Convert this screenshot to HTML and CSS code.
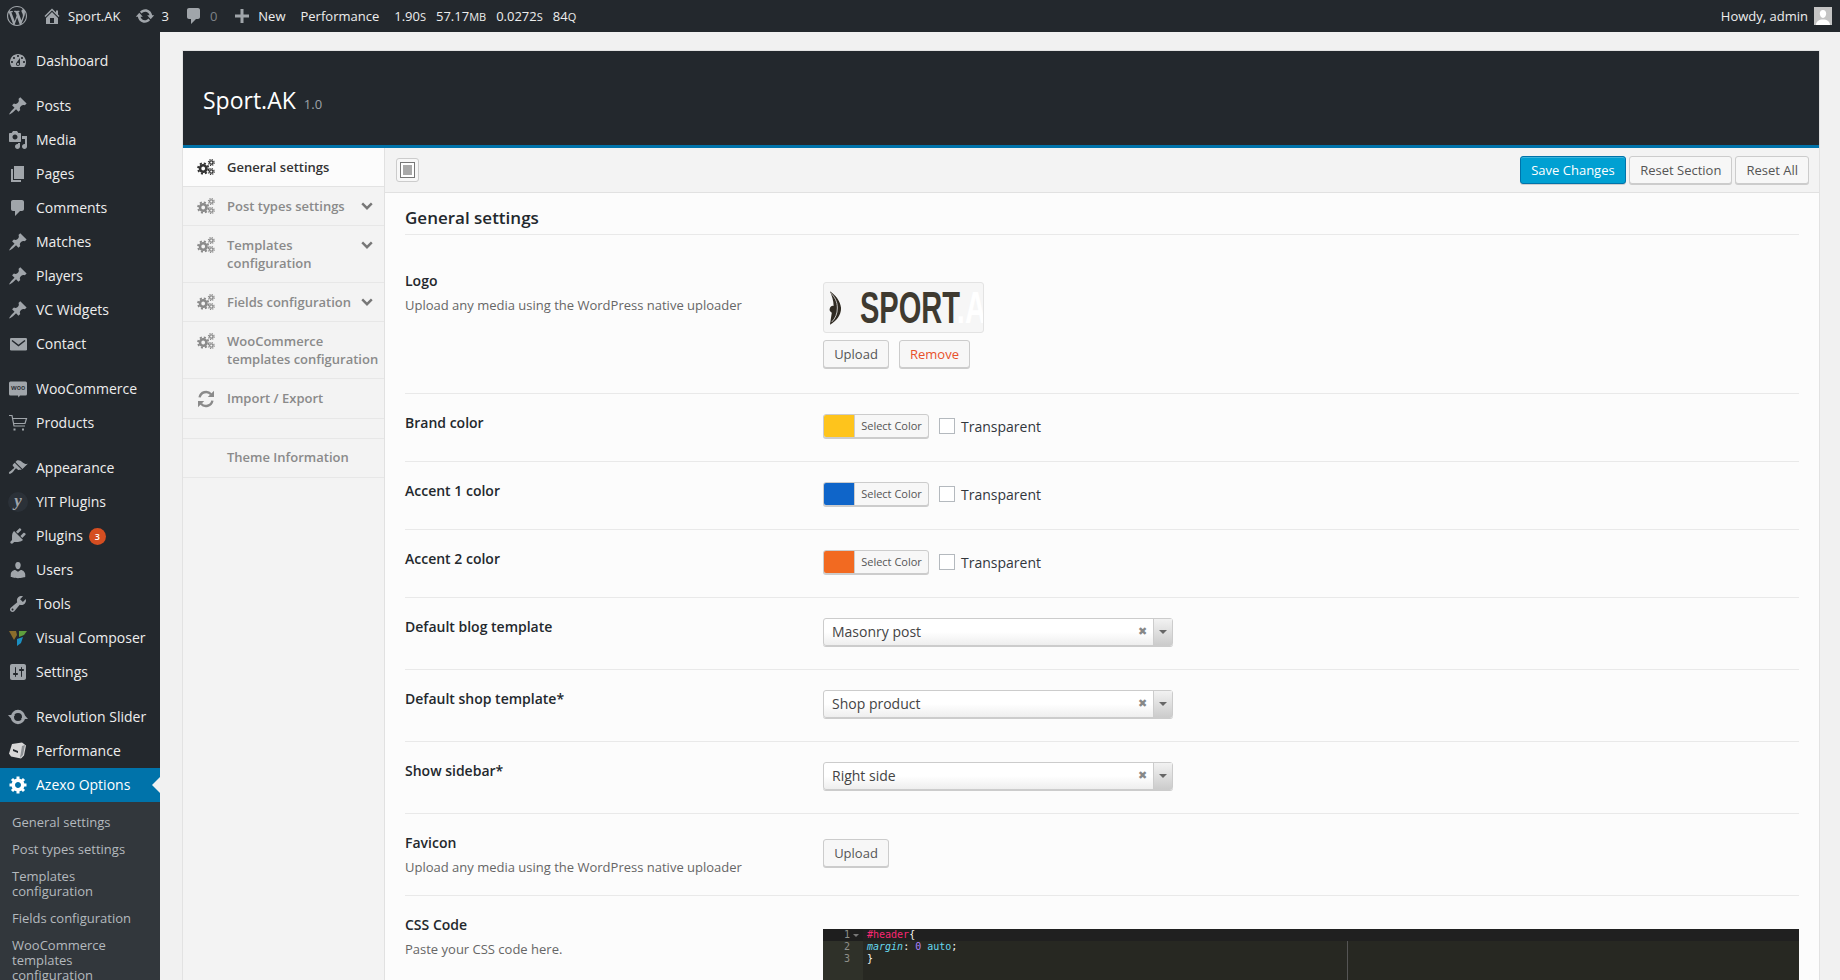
FILE: index.html
```html
<!doctype html>
<html lang="en-us">
  <head>
    <meta charset="utf-8">
    <title>Sport.AK Options</title>
    <link rel="stylesheet" href="styles.css">
  </head>
  <body>
    <svg class="sprite" xmlns="http://www.w3.org/2000/svg">
      <symbol id="i-wp" viewBox="0 0 20 20"><path d="M20 10c0-5.51-4.49-10-10-10C4.48 0 0 4.49 0 10c0 5.52 4.48 10 10 10 5.51 0 10-4.48 10-10zM7.78 15.37L4.37 6.22c.55-.02 1.17-.08 1.17-.08.5-.06.44-1.13-.06-1.11 0 0-1.45.11-2.37.11-.18 0-.37 0-.58-.01C4.12 2.69 6.87 1.11 10 1.11c2.33 0 4.45.87 6.05 2.34-.68-.11-1.65.39-1.65 1.58 0 .74.45 1.36.9 2.1.35.61.55 1.36.55 2.46 0 1.49-1.4 5-1.4 5l-3.03-8.37c.54-.02.82-.17.82-.17.5-.05.44-1.25-.06-1.22 0 0-1.44.12-2.38.12-.87 0-2.33-.12-2.33-.12-.5-.03-.56 1.2-.06 1.22l.92.08 1.26 3.41zM17.41 10c.24-.64.74-1.87.43-4.25.7 1.29 1.05 2.71 1.05 4.25 0 3.29-1.73 6.24-4.4 7.78.97-2.59 1.94-5.2 2.92-7.78zM6.1 18.09C3.12 16.65 1.11 13.53 1.11 10c0-1.3.23-2.48.72-3.59C3.25 10.3 4.67 14.2 6.1 18.09zm4.03-6.63l2.58 6.98c-.86.29-1.76.45-2.71.45-.79 0-1.57-.11-2.29-.33.81-2.38 1.62-4.74 2.42-7.1z"/></symbol>
      <symbol id="i-home" viewBox="0 0 20 20"><path d="M16 8.5l1.53 1.53-1.06 1.06L10 4.62l-6.47 6.47-1.06-1.06L10 2.5l4 4v-2h2v4zm-6-2.46l6 5.99V18H4v-5.97zM12 17v-5H8v5h4z"/></symbol>
      <symbol id="i-update" viewBox="0 0 20 20"><path d="M10.2 3.28c3.53 0 6.43 2.61 6.92 6h2.08l-3.5 4-3.5-4h2.32c-.45-1.97-2.21-3.45-4.32-3.45-1.45 0-2.73.71-3.54 1.78L4.95 5.66C6.23 4.2 8.11 3.28 10.2 3.28zm-.4 13.44c-3.52 0-6.43-2.61-6.92-6H.8l3.5-4c1.17 1.33 2.33 2.67 3.5 4H5.48c.45 1.97 2.21 3.45 4.32 3.45 1.45 0 2.73-.71 3.54-1.78l1.71 1.95c-1.28 1.46-3.15 2.38-5.25 2.38z"/></symbol>
      <symbol id="i-comment" viewBox="0 0 20 20"><path d="M5 2h9c1.1 0 2 .9 2 2v7c0 1.1-.9 2-2 2h-2l-5 5v-5H5c-1.1 0-2-.9-2-2V4c0-1.1.9-2 2-2z"/></symbol>
      <symbol id="i-plus" viewBox="0 0 20 20"><path d="M17 8.500v3h-5.500V17h-3v-5.500H3v-3h5.500V3h3v5.500z"/></symbol>
      <symbol id="i-dash" viewBox="0 0 20 20"><path d="M3.76 16h12.48c1.1-1.37 1.76-3.11 1.76-5 0-4.42-3.58-8-8-8s-8 3.58-8 8c0 1.89.66 3.63 1.76 5zM10 4c.55 0 1 .45 1 1s-.45 1-1 1-1-.45-1-1 .45-1 1-1zM6 6c.55 0 1 .45 1 1s-.45 1-1 1-1-.45-1-1 .45-1 1-1zm8 0c.55 0 1 .45 1 1s-.45 1-1 1-1-.45-1-1 .45-1 1-1zm-5.37 5.55L12 7v6c0 1.1-.9 2-2 2s-2-.9-2-2c0-.57.24-1.08.63-1.45zM4 10c.55 0 1 .45 1 1s-.45 1-1 1-1-.45-1-1 .45-1 1-1zm12 0c.55 0 1 .45 1 1s-.45 1-1 1-1-.45-1-1 .45-1 1-1zm-5 3c0-.55-.45-1-1-1s-1 .45-1 1 .45 1 1 1 1-.45 1-1z" fill-rule="evenodd"/></symbol>
      <symbol id="i-pin" viewBox="0 0 20 20"><path d="M10.44 3.02l1.82-1.82 6.36 6.35-1.83 1.82c-1.05-.68-2.48-.57-3.41.36l-.75.75c-.92.93-1.04 2.35-.35 3.41l-1.83 1.82-2.41-2.41-2.8 2.79c-.42.42-3.38 2.71-3.8 2.29s1.86-3.39 2.28-3.81l2.79-2.79L4.1 9.36l1.83-1.82c1.05.69 2.48.57 3.4-.36l.75-.75c.93-.92 1.05-2.35.36-3.41z"/></symbol>
      <symbol id="i-media" viewBox="0 0 20 20"><path d="M13 11V4c0-.55-.45-1-1-1h-1.67L9 1H5L3.67 3H2c-.55 0-1 .45-1 1v7c0 .55.45 1 1 1h10c.55 0 1-.45 1-1zM7 4.5c1.38 0 2.5 1.12 2.5 2.5S8.38 9.5 7 9.5 4.5 8.38 4.5 7 5.62 4.5 7 4.5zM14 6h5v10.5c0 1.38-1.12 2.5-2.5 2.5S14 17.88 14 16.5s1.12-2.5 2.5-2.5c.17 0 .34.02.5.05V9h-3V6zm-4 8.05V13h2v3.5c0 1.38-1.12 2.5-2.5 2.5S7 17.88 7 16.5 8.12 14 9.5 14c.17 0 .34.02.5.05z" fill-rule="evenodd"/></symbol>
      <symbol id="i-pages" viewBox="0 0 20 20"><path d="M6 15V2h10v13H6zm-1 1h8v2H3V5h2v11z"/></symbol>
      <symbol id="i-mail" viewBox="0 0 20 20"><rect x="2" y="4" width="17" height="12.500" rx="1.300"/><path d="M4 6.500l6.500 5 6.500-5" fill="none" stroke="#23282d" stroke-width="1.500"/></symbol>
      <symbol id="i-brush" viewBox="0 0 20 20"><path d="M14.48 11.06L7.41 3.99l1.5-1.5c.5-.56 2.3-.47 3.51.32 1.21.8 1.43 1.28 2.91 2.1 1.18.64 2.45 1.26 4.45.85zm-.71.71L6.7 4.7 4.93 6.47c-.39.39-.39 1.02 0 1.41l1.06 1.06c.39.39.39 1.03 0 1.42-.6.6-1.43 1.11-2.21 1.69-.35.26-.7.53-1.01.84C1.43 13.23.4 14.93 1.1 15.63c.71.7 2.4-.33 3.75-1.68.31-.31.58-.66.85-1.01.58-.78 1.09-1.61 1.69-2.21.39-.39 1.02-.39 1.41 0l1.06 1.06c.39.39 1.02.39 1.41 0z"/></symbol>
      <symbol id="i-plug" viewBox="0 0 20 20"><path d="M13.11 4.36L9.87 7.6 8 5.73l3.24-3.24c.35-.34 1.05-.2 1.56.32.52.51.66 1.21.31 1.55zm-8 1.77l.91-1.12 9.01 9.01-1.19.84c-.71.71-2.63 1.16-3.82 1.16H6.14L4.9 17.26c-.59.59-1.54.59-2.12 0-.59-.58-.59-1.53 0-2.12l1.24-1.24v-3.88c0-1.13.4-3.19 1.09-3.89zm7.26 3.97l3.24-3.24c.34-.35 1.04-.21 1.55.31.52.51.66 1.21.31 1.55l-3.24 3.25z"/></symbol>
      <symbol id="i-user" viewBox="0 0 20 20"><path d="M10 9.25c-2.27 0-2.73-3.44-2.73-3.44C7 4.02 7.82 2 9.97 2c2.16 0 2.98 2.02 2.71 3.81 0 0-.41 3.44-2.68 3.44zm0 2.57L12.72 10c2.39 0 4.52 2.33 4.52 4.53v2.49s-3.65 1.13-7.24 1.13c-3.65 0-7.24-1.13-7.24-1.13v-2.49c0-2.25 1.94-4.48 4.47-4.48z"/></symbol>
      <symbol id="i-tool" viewBox="0 0 20 20"><path fill-rule="evenodd" d="M16.68 9.77c-1.34 1.34-3.3 1.67-4.95.99l-5.41 6.52c-.99.99-2.59.99-3.58 0s-.99-2.59 0-3.57l6.52-5.42c-.68-1.65-.35-3.61.99-4.95 1.28-1.28 3.12-1.62 4.72-1.06l-2.89 2.89 2.82 2.82 2.86-2.87c.53 1.58.18 3.39-1.08 4.65zM3.81 16.21c.4.39 1.04.39 1.43 0 .4-.4.4-1.04 0-1.43-.39-.4-1.03-.4-1.43 0-.39.39-.39 1.03 0 1.43z"/></symbol>
      <symbol id="i-set" viewBox="0 0 20 20"><path fill-rule="evenodd" d="M18 16V4c0-1.1-.9-2-2-2H4c-1.1 0-2 .9-2 2v12c0 1.1.9 2 2 2h12c1.1 0 2-.9 2-2zM8 11h1c.55 0 1 .45 1 1s-.45 1-1 1H8v1.5c0 .28-.22.5-.5.5s-.5-.22-.5-.5V13H6c-.55 0-1-.45-1-1s.45-1 1-1h1V5.5c0-.28.22-.5.5-.5s.5.22.5.5V11zm5-2h-1c-.55 0-1-.45-1-1s.45-1 1-1h1V5.5c0-.28.22-.5.5-.5s.5.22.5.5V7h1c.55 0 1 .45 1 1s-.45 1-1 1h-1v5.5c0 .28-.22.5-.5.5s-.5-.22-.5-.5V9z"/></symbol>
      <symbol id="i-gear" viewBox="0 0 20 20"><path fill-rule="evenodd" d="M18.5 11.500h-2.180c-.170.700-.440 1.350-.810 1.930l1.540 1.540-2.100 2.100-1.540-1.540c-.580.360-1.230.630-1.910.790v2.180h-3v-2.180c-.680-.160-1.330-.430-1.910-.790l-1.540 1.540-2.120-2.120 1.540-1.540c-.360-.580-.630-1.230-.790-1.910H1.500V8.530h2.170c.160-.700.440-1.350.800-1.940L2.930 5.050l2.100-2.100 1.540 1.540c.580-.370 1.240-.640 1.930-.810V1.500h3v2.180c.680.160 1.330.430 1.910.790l1.540-1.540 2.120 2.120-1.540 1.540c.360.590.640 1.240.800 1.940h2.170v2.970zM10 13c1.660 0 3-1.340 3-3s-1.340-3-3-3-3 1.340-3 3 1.340 3 3 3z"/></symbol>
      <symbol id="i-cogs" viewBox="0 0 18 16" fill="none" stroke="currentColor">
        <circle cx="6.200" cy="9.500" r="3.200" stroke-width="2.600"/>
        <circle cx="6.200" cy="9.500" r="5.200" stroke-width="1.800" stroke-dasharray="2.100 1.980"/>
        <circle cx="14.300" cy="3.500" r="1.700" stroke-width="1.300"/>
        <circle cx="14.300" cy="3.500" r="2.900" stroke-width="1.200" stroke-dasharray="1.200 1.080"/>
        <circle cx="14.300" cy="12.500" r="1.700" stroke-width="1.300"/>
        <circle cx="14.300" cy="12.500" r="2.900" stroke-width="1.200" stroke-dasharray="1.200 1.080"/>
      </symbol>
      <symbol id="i-refresh" viewBox="0 0 18 18">
        <path d="M2.6 7.4A6.6 6.6 0 0 1 14 4.2M15.4 10.6A6.6 6.6 0 0 1 4 13.8" fill="none" stroke="currentColor" stroke-width="2.4"/>
        <path d="M17 .8V7h-6.2zM1 17.2V11h6.2z"/>
      </symbol>
      <symbol id="i-chev" viewBox="0 0 12 8"><path d="M1.2 1.4 6 6.2l4.8-4.8" fill="none" stroke="currentColor" stroke-width="2.4"/></symbol>
      <symbol id="i-cart" viewBox="0 0 20 20"><path d="M1 2.5h3l2 10.5h11M4.6 5.5h13.9l-1.5 5H5.6" fill="none" stroke="currentColor" stroke-width="1.2"/><path d="M5.5 15.5h2v2h-2zM14 15.5h2v2h-2z"/></symbol>
      <symbol id="i-woo" viewBox="0 0 20 20"><path d="M2.5 2.5h15a1.5 1.5 0 0 1 1.5 1.5v11a1.5 1.5 0 0 1-1.5 1.5H12l-1.5 2-.5-2H2.5A1.5 1.5 0 0 1 1 15V4a1.5 1.5 0 0 1 1.5-1.5z"/></symbol>
      <symbol id="i-vc" viewBox="0 0 20 20">
        <path d="M1 3h7l1 4-3 5z" fill="#8a6d2b"/>
        <path d="M11 3h8l-3 4-5 2z" fill="#5f9e3c"/>
        <path d="M9 11l6-2-2 6-4 3z" fill="#1b8fc1"/>
      </symbol>
      <symbol id="i-slider" viewBox="0 0 20 20"><circle cx="10" cy="10" r="5.6" fill="none" stroke="currentColor" stroke-width="3.2"/><path d="M0 8h7l-3.5 4zM13 12h7l-3.5-4z"/></symbol>
      <symbol id="i-cube" viewBox="0 0 20 20"><path d="M4 3l10-1.5 4 3-2 10-3 3-10-2-2-3z" fill="#d8d8d8"/><path d="M14 5l3-1-2 10-3 3z" fill="#8b8f93"/><path d="M5 8l5 2v2L5 10z" fill="#23282d"/></symbol>
    </svg>

    <header class="adminbar">
      <div class="bar-left">
        <svg class="bar-wp"><use href="#i-wp"/></svg>
        <a class="bar-item"><svg class="bar-ic"><use href="#i-home"/></svg>Sport.AK</a>
        <a class="bar-item"><svg class="bar-ic"><use href="#i-update"/></svg>3</a>
        <a class="bar-item bar-dim"><svg class="bar-ic"><use href="#i-comment"/></svg>0</a>
        <a class="bar-item"><svg class="bar-ic"><use href="#i-plus"/></svg>New</a>
        <a class="bar-item">Performance</a>
        <span class="stats">
          <span>1.90<i>S</i></span>
          <span>57.17<i>MB</i></span>
          <span>0.0272<i>S</i></span>
          <span>84<i>Q</i></span>
        </span>
      </div>
      <div class="bar-right">
        Howdy, admin
        <span class="avatar"><svg viewBox="0 0 18 18"><path d="M9 3c2 0 3.2 1.6 3.2 3.6S11 11 9 11 5.800 8.600 5.800 6.600 7 3 9 3zM2 18c0-3.500 3-5.500 7-5.500s7 2 7 5.500z"/></svg></span>
      </div>
    </header>

    <div class="layout">
      <nav class="adminmenu">
        <ul class="menu">
          <li><svg class="mi"><use href="#i-dash"/></svg>Dashboard</li>
          <li class="sep"></li>
          <li><svg class="mi"><use href="#i-pin"/></svg>Posts</li>
          <li><svg class="mi"><use href="#i-media"/></svg>Media</li>
          <li><svg class="mi"><use href="#i-pages"/></svg>Pages</li>
          <li><svg class="mi"><use href="#i-comment"/></svg>Comments</li>
          <li><svg class="mi"><use href="#i-pin"/></svg>Matches</li>
          <li><svg class="mi"><use href="#i-pin"/></svg>Players</li>
          <li><svg class="mi"><use href="#i-pin"/></svg>VC Widgets</li>
          <li><svg class="mi"><use href="#i-mail"/></svg>Contact</li>
          <li class="sep"></li>
          <li><span class="woo"><svg class="mi"><use href="#i-woo"/></svg><b>woo</b></span>WooCommerce</li>
          <li><svg class="mi"><use href="#i-cart"/></svg>Products</li>
          <li class="sep"></li>
          <li><svg class="mi"><use href="#i-brush"/></svg>Appearance</li>
          <li><span class="yit">y</span>YIT Plugins</li>
          <li><svg class="mi"><use href="#i-plug"/></svg>Plugins<span class="badge">3</span></li>
          <li><svg class="mi"><use href="#i-user"/></svg>Users</li>
          <li><svg class="mi"><use href="#i-tool"/></svg>Tools</li>
          <li><svg class="mi"><use href="#i-vc"/></svg>Visual Composer</li>
          <li><svg class="mi"><use href="#i-set"/></svg>Settings</li>
          <li class="sep"></li>
          <li><svg class="mi"><use href="#i-slider"/></svg>Revolution Slider</li>
          <li><svg class="mi"><use href="#i-cube"/></svg>Performance</li>
          <li class="current"><svg class="mi"><use href="#i-gear"/></svg>Azexo Options</li>
        </ul>
        <ul class="submenu">
          <li>General settings</li>
          <li>Post types settings</li>
          <li>Templates configuration</li>
          <li>Fields configuration</li>
          <li>WooCommerce templates configuration</li>
        </ul>
      </nav>

      <main class="wrap">
        <div class="panel">
          <div class="panel-head">
            <h2>Sport.AK</h2><span class="version">1.0</span>
          </div>
          <div class="panel-body">
            <ul class="tabs">
              <li class="tab active"><svg class="tab-ic"><use href="#i-cogs"/></svg><span>General settings</span></li>
              <li class="tab"><svg class="tab-ic"><use href="#i-cogs"/></svg><span>Post types settings</span><svg class="chev"><use href="#i-chev"/></svg></li>
              <li class="tab"><svg class="tab-ic"><use href="#i-cogs"/></svg><span>Templates<br>configuration</span><svg class="chev"><use href="#i-chev"/></svg></li>
              <li class="tab"><svg class="tab-ic"><use href="#i-cogs"/></svg><span>Fields configuration</span><svg class="chev"><use href="#i-chev"/></svg></li>
              <li class="tab"><svg class="tab-ic"><use href="#i-cogs"/></svg><span>WooCommerce<br>templates configuration</span></li>
              <li class="tab"><svg class="tab-ic tab-refresh"><use href="#i-refresh"/></svg><span>Import / Export</span></li>
              <li class="tab-gap"></li>
              <li class="tab"><span class="no-ic">Theme Information</span></li>
            </ul>

            <div class="content">
              <div class="toolbar">
                <a class="expand"><svg viewBox="0 0 21 22"><rect x="3.500" y="3.500" width="14" height="15" fill="#fff" stroke="#777"/><rect x="6" y="6" width="9" height="10" fill="#a9a9a9"/></svg></a>
                <div class="actions">
                  <a class="btn btn-primary">Save Changes</a>
                  <a class="btn">Reset Section</a>
                  <a class="btn">Reset All</a>
                </div>
              </div>

              <div class="section">
                <h3>General settings</h3>

                <div class="row row-logo">
                  <div class="label"><strong>Logo</strong><p>Upload any media using the WordPress native uploader</p></div>
                  <div class="control">
                    <div class="logo-box">
                      <svg class="logo-bird" viewBox="0 0 14 36"><path d="M1 0c6 4 11 10 12 18 0 8-5 14-12 18l2-13c-2-1-3-3-2-5s3-3 4-2C5 10 3 5 1 0z" fill="#2f2a22"/><path d="M2 2c4 4 7 9 7 16 0 6-2 11-6 15" fill="none" stroke="#f6f6f6" stroke-width=".8"/></svg>
                      <span class="logo-text">SPORT<em>.A</em></span>
                    </div>
                    <div class="btn-line">
                      <a class="btn btn-up">Upload</a>
                      <a class="btn btn-rm">Remove</a>
                    </div>
                  </div>
                </div>

                <div class="row row-color">
                  <div class="label"><strong>Brand color</strong></div>
                  <div class="control color-line">
                    <a class="picker"><span class="swatch swatch-brand"></span><span class="picker-txt">Select Color</span></a>
                    <span class="check"></span><span class="check-txt">Transparent</span>
                  </div>
                </div>
                <div class="row row-color">
                  <div class="label"><strong>Accent 1 color</strong></div>
                  <div class="control color-line">
                    <a class="picker"><span class="swatch swatch-a1"></span><span class="picker-txt">Select Color</span></a>
                    <span class="check"></span><span class="check-txt">Transparent</span>
                  </div>
                </div>
                <div class="row row-color">
                  <div class="label"><strong>Accent 2 color</strong></div>
                  <div class="control color-line">
                    <a class="picker"><span class="swatch swatch-a2"></span><span class="picker-txt">Select Color</span></a>
                    <span class="check"></span><span class="check-txt">Transparent</span>
                  </div>
                </div>

                <div class="row row-select">
                  <div class="label"><strong>Default blog template</strong></div>
                  <div class="control"><div class="select"><span class="select-val">Masonry post</span><span class="select-x">&#10006;</span><span class="select-arrow"></span></div></div>
                </div>
                <div class="row row-select">
                  <div class="label"><strong>Default shop template*</strong></div>
                  <div class="control"><div class="select"><span class="select-val">Shop product</span><span class="select-x">&#10006;</span><span class="select-arrow"></span></div></div>
                </div>
                <div class="row row-select">
                  <div class="label"><strong>Show sidebar*</strong></div>
                  <div class="control"><div class="select"><span class="select-val">Right side</span><span class="select-x">&#10006;</span><span class="select-arrow"></span></div></div>
                </div>

                <div class="row row-favicon">
                  <div class="label"><strong>Favicon</strong><p>Upload any media using the WordPress native uploader</p></div>
                  <div class="control"><a class="btn btn-up">Upload</a></div>
                </div>

                <div class="row row-css">
                  <div class="label"><strong>CSS Code</strong><p>Paste your CSS code here.</p></div>
                  <div class="control">
                    <div class="editor">
                      <div class="gutter">
                        <div class="gutter-on">1<i></i></div>
                        <div>2</div>
                        <div>3</div>
                      </div>
                      <div class="code">
                        <div class="code-on"><span class="t-sel">#header</span>{</div>
                        <div><em class="t-prop">margin</em>: <span class="t-num">0</span> <span class="t-prop">auto</span>;</div>
                        <div>}</div>
                        <span class="margin-line"></span>
                      </div>
                    </div>
                  </div>
                </div>
              </div>
            </div>
          </div>
        </div>
      </main>
    </div>
  </body>
</html>
```

FILE: styles.css
```css
html, body
{
	margin: 0;
	padding: 0;
	height: 980px;
	overflow: hidden;
}

body
{
	background: #f1f1f1;
	font-family: "Open Sans", sans-serif;
	font-size: 13px;
	color: #444;
}

ul
{
	list-style: none;
	margin: 0;
	padding: 0;
}

svg
{
	fill: currentColor;
}

.sprite
{
	display: none;
}

/* top bar */
.adminbar
{
	display: flex;
	justify-content: space-between;
	align-items: center;
	height: 32px;
	background: #23282d;
	color: #eee;
	padding: 0 8px 0 7px;
}

.bar-left, .bar-right
{
	display: flex;
	align-items: center;
}

.bar-wp
{
	width: 20px;
	height: 20px;
	color: #a0a5aa;
	margin-right: 15px;
}

.bar-item
{
	display: flex;
	align-items: center;
	margin-right: 15px;
}

.bar-ic
{
	width: 20px;
	height: 20px;
	margin-right: 6px;
	color: #a0a5aa;
}

.bar-dim
{
	color: #7d8287;
}

.bar-dim .bar-ic
{
	color: #a0a5aa;
}

.stats
{
	display: flex;
	gap: 10px;
}

.stats i
{
	font-style: normal;
	font-size: 11px;
}

.bar-right
{
	gap: 6px;
}

.avatar
{
	display: block;
	width: 18px;
	height: 18px;
	background: #c4c4c4;
	overflow: hidden;
}

.avatar svg
{
	display: block;
	width: 18px;
	height: 18px;
	fill: #fff;
}

/* left menu */
.layout
{
	display: flex;
	height: 948px;
}

.adminmenu
{
	flex: 0 0 160px;
	width: 160px;
	background: #23282d;
	color: #eee;
	font-size: 14px;
	padding-top: 12px;
	overflow: hidden;
	box-sizing: border-box;
}

.menu li
{
	position: relative;
	display: flex;
	align-items: center;
	box-sizing: border-box;
	height: 34px;
	padding-bottom: 2px;
}

.menu li.sep
{
	height: 11px;
	padding: 0;
}

.mi
{
	flex: 0 0 20px;
	width: 20px;
	height: 20px;
	margin: 2px 8px 0 8px;
	color: #a0a5aa;
}

.woo
{
	position: relative;
	display: block;
	width: 20px;
	height: 20px;
	margin: 2px 8px 0;
}

.woo .mi
{
	margin: 0;
}

.woo b
{
	position: absolute;
	top: 4px;
	left: 3px;
	font-size: 7px;
	line-height: 9px;
	font-weight: 600;
	color: #23282d;
}

.yit
{
	flex: 0 0 20px;
	width: 20px;
	height: 20px;
	margin: 2px 8px 0;
	border-radius: 50%;
	background: #2b3138;
	color: #a0a5aa;
	font: italic bold 17px/17px "Liberation Serif", serif;
	text-align: center;
}

.badge
{
	width: 17px;
	height: 17px;
	margin: 2px 0 0 6px;
	border-radius: 50%;
	background: #d54e21;
	color: #fff;
	font-size: 9px;
	font-weight: 600;
	line-height: 17px;
	text-align: center;
}

.menu li.current
{
	background: #0073aa;
	color: #fff;
}

.current .mi
{
	color: #fff;
}

.current::after
{
	content: "";
	position: absolute;
	right: 0;
	top: 9px;
	border: 8px solid transparent;
	border-right-color: #f1f1f1;
	border-left-width: 0;
}

.submenu
{
	background: #32373c;
	color: #b4b9be;
	font-size: 13px;
	line-height: 15px;
	padding: 7px 0 20px;
}

.submenu li
{
	padding: 6px 12px;
}

/* options panel */
.wrap
{
	flex: 1;
	padding: 18px 20px 0 22px;
	min-width: 0;
}

.panel
{
	border: 1px solid #e2e2e2;
	border-bottom: 0;
}

.panel-head
{
	display: flex;
	align-items: baseline;
	height: 94px;
	background: #23282d;
	border-bottom: 3px solid #0073aa;
	padding-left: 20px;
	color: #fff;
}

.panel-head h2
{
	margin: 33px 0 0;
	font-size: 23px;
	font-weight: 400;
	line-height: 32px;
}

.version
{
	margin-left: 8px;
	font-size: 13px;
	color: #9ea3a8;
}

.panel-body
{
	display: flex;
	height: 832px;
}

.tabs
{
	flex: 0 0 201px;
	width: 201px;
	background: #f3f3f3;
	border-right: 1px solid #e1e1e1;
	font-weight: 600;
	line-height: 18px;
	color: #8a8a8a;
}

.tab
{
	position: relative;
	display: flex;
	padding: 10px 0 10px 14px;
	border-bottom: 1px solid #e7e7e7;
}

.tab.active
{
	background: #fcfcfc;
	color: #333;
	border-bottom-color: #e3e3e3;
}

.tab-ic
{
	flex: 0 0 18px;
	width: 18px;
	height: 16px;
	margin: 1px 12px 0 0;
	color: #8a8a8a;
}

.active .tab-ic
{
	color: #333;
}

.tab-refresh
{
	height: 18px;
}

.tab-gap
{
	height: 19px;
	border-bottom: 1px solid #e7e7e7;
}

.no-ic
{
	margin: -1px 0 1px 30px;
}

.chev
{
	position: absolute;
	top: 15px;
	right: 11px;
	width: 12px;
	height: 8px;
	color: #777;
}

.content
{
	flex: 1;
	background: #fcfcfc;
	min-width: 0;
}

.toolbar
{
	display: flex;
	justify-content: space-between;
	align-items: center;
	height: 44px;
	background: #f3f3f3;
	border-bottom: 1px solid #e1e1e1;
	padding: 0 10px 0 11px;
}

.expand
{
	display: block;
	width: 23px;
	height: 24px;
	box-sizing: border-box;
	border: 1px solid #ccc;
	border-radius: 3px;
	background: #f7f7f7;
}

.expand svg
{
	display: block;
	width: 21px;
	height: 22px;
}

.actions
{
	display: flex;
	gap: 3px;
}

.btn
{
	display: inline-block;
	box-sizing: border-box;
	height: 28px;
	line-height: 26px;
	padding: 0 10px;
	border: 1px solid #ccc;
	border-radius: 3px;
	background: #f7f7f7;
	box-shadow: 0 1px 0 #ccc;
	color: #555;
}

.btn-primary
{
	padding: 0 10.5px;
	background: #00a0d2;
	border-color: #0073aa;
	box-shadow: inset 0 1px 0 rgba(120,200,230,0.5), 0 1px 0 rgba(0,0,0,0.15);
	color: #fff;
}

.btn-rm
{
	color: #e8502a;
}

.section
{
	padding: 0 20px;
}

.section h3
{
	margin: 0;
	padding: 14px 0 5px;
	font-size: 17px;
	font-weight: 600;
	line-height: 22px;
	color: #23282d;
	border-bottom: 1px solid #e9e9e9;
}

.row
{
	display: flex;
	border-bottom: 1px solid #e9e9e9;
}

.row:last-child
{
	border-bottom: 0;
}

.label
{
	flex: 0 0 418px;
	width: 418px;
	line-height: 18px;
}

.label strong
{
	display: block;
	font-size: 14px;
	font-weight: 600;
	color: #23282d;
}

.label p
{
	margin: 6px 0 0;
	color: #666;
}

.control
{
	flex: 1;
	min-width: 0;
}

.row-logo
{
	height: 158px;
}

.row-logo .label
{
	padding-top: 37px;
}

.row-logo .control
{
	padding-top: 47px;
}

.logo-box
{
	display: flex;
	align-items: center;
	box-sizing: border-box;
	width: 161px;
	height: 51px;
	border: 1px solid #e3e3e3;
	border-radius: 3px;
	background: #f6f6f6;
	overflow: hidden;
}

.logo-bird
{
	flex: 0 0 13px;
	width: 13px;
	height: 36px;
	margin-left: 5px;
}

.logo-text
{
	display: block;
	margin-left: 18px;
	font: bold 44px/44px "Liberation Sans Narrow", "Liberation Sans", sans-serif;
	color: #3f3a30;
	white-space: nowrap;
	transform: scaleX(0.66);
	transform-origin: left center;
}

.logo-text em
{
	font-style: normal;
	color: #fff;
}

.btn-line
{
	display: flex;
	gap: 10px;
	margin-top: 7px;
}

.btn-up
{
	height: 28px;
	width: 66px;
	text-align: center;
	padding: 0;
}

.btn-rm
{
	width: 71px;
	text-align: center;
	padding: 0;
}

.row-color
{
	height: 67px;
}

.row-color .label
{
	padding-top: 20px;
}

.color-line
{
	display: flex;
	align-items: center;
	height: 23px;
	margin-top: 20px;
}

.picker
{
	display: flex;
	box-sizing: border-box;
	width: 106px;
	height: 24px;
	border: 1px solid #ccc;
	border-radius: 3px;
	background: #f7f7f7;
	box-shadow: 0 1px 0 #ccc;
	overflow: hidden;
}

.swatch
{
	flex: 0 0 30px;
	border-right: 1px solid #ccc;
}

.swatch-brand { background: #fec41c; }
.swatch-a1 { background: #0f65c9; }
.swatch-a2 { background: #f26a21; }

.picker-txt
{
	flex: 1;
	font-size: 11px;
	line-height: 22px;
	text-align: center;
	color: #555;
}

.check
{
	box-sizing: border-box;
	width: 16px;
	height: 16px;
	margin: 1px 6px 0 10px;
	border: 1px solid #b4b9be;
	background: #fff;
}

.check-txt
{
	padding-top: 2px;
	font-size: 14px;
	color: #32373c;
}

.row-select
{
	height: 71px;
}

.row-select .label
{
	padding-top: 20px;
}

.row-select .control
{
	padding-top: 20px;
}

.select
{
	display: flex;
	align-items: center;
	box-sizing: border-box;
	width: 350px;
	height: 28px;
	border: 1px solid #ccc;
	border-radius: 3px;
	background: linear-gradient(#fff 50%, #eee);
	box-shadow: 0 1px 0 #ccc;
}

.select-val
{
	flex: 1;
	padding: 0 0 2px 8px;
	font-size: 14px;
	color: #444;
}

.select-x
{
	width: 12px;
	margin: -2px 3px 0 0;
	font-family: "DejaVu Sans", sans-serif;
	font-size: 11px;
	color: #888;
}

.select-arrow
{
	position: relative;
	box-sizing: border-box;
	width: 19px;
	height: 26px;
	border-left: 1px solid #ccc;
	background: linear-gradient(#f2f2f2, #ccc);
}

.select-arrow::after
{
	content: "";
	position: absolute;
	top: 11px;
	left: 5px;
	border: 4px solid transparent;
	border-top: 4px solid #666;
	border-bottom: 0;
}

.row-favicon
{
	height: 81px;
}

.row-favicon .label
{
	padding-top: 20px;
}

.row-favicon .control
{
	padding-top: 25px;
}

.row-css .label
{
	padding-top: 20px;
}

.row-css .control
{
	padding-top: 33px;
}

/* code box */
.editor
{
	display: flex;
	height: 51px;
	background: #272822;
	font: 10px/12px "DejaVu Sans Mono", monospace;
	color: #f8f8f2;
}

.gutter
{
	flex: 0 0 40px;
	background: #2f3129;
	color: #8f908a;
	text-align: right;
}

.gutter div
{
	padding-right: 13px;
	position: relative;
}

.gutter-on
{
	background: #1e1e1e;
}

.gutter-on i
{
	position: absolute;
	top: 5px;
	right: 4px;
	border: 3px solid transparent;
	border-top: 3px solid #777;
	border-bottom: 0;
}

.code
{
	position: relative;
	flex: 1;
}

.code div
{
	padding-left: 4px;
}

.code-on
{
	background: #202020;
}

.t-sel { color: #f92672; }
.t-prop { color: #66d9ef; }
.t-num { color: #ae81ff; }

.margin-line
{
	position: absolute;
	top: 12px;
	bottom: 0;
	left: 484px;
	border-left: 1px solid #555;
}
```
